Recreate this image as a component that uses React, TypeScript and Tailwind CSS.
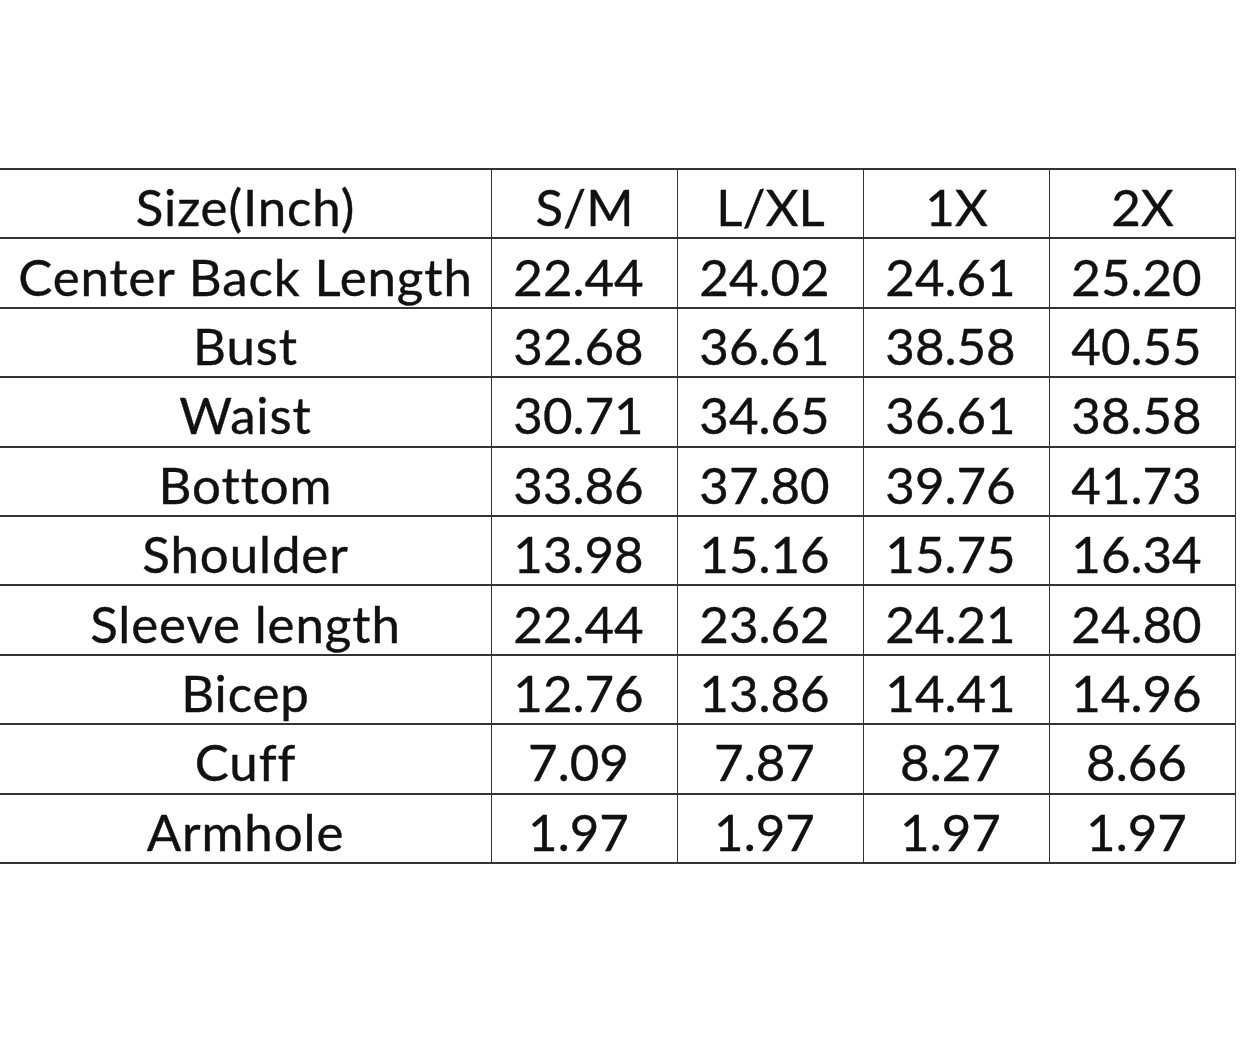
const sizes = ['S/M', 'L/XL', '1X', '2X'];

const rows: [string, string[]][] = [
  ['Center Back Length', ['22.44', '24.02', '24.61', '25.20']],
  ['Bust', ['32.68', '36.61', '38.58', '40.55']],
  ['Waist', ['30.71', '34.65', '36.61', '38.58']],
  ['Bottom', ['33.86', '37.80', '39.76', '41.73']],
  ['Shoulder', ['13.98', '15.16', '15.75', '16.34']],
  ['Sleeve length', ['22.44', '23.62', '24.21', '24.80']],
  ['Bicep', ['12.76', '13.86', '14.41', '14.96']],
  ['Cuff', ['7.09', '7.87', '8.27', '8.66']],
  ['Armhole', ['1.97', '1.97', '1.97', '1.97']],
];

const rowCls =
  'grid grid-cols-[491px_186px_186px_186px_186px] h-[69.4px] border-b-2 border-[#333]';
const labelCls = 'flex items-center justify-center pt-[6px] tracking-[0.9px]';
const cellCls = 'flex items-center justify-center pt-[6px] border-l border-[#333]';

export default function App() {
  return (
    <div
      className="w-[1242px] h-[1048px] bg-white pt-[168px] text-[#111] text-[51px] leading-none [font-variant-ligatures:none] [-webkit-text-stroke:0.4px_#111]"
      style={{ fontFamily: 'Lato, "Open Sans", sans-serif' }}
    >
      <div className="w-[1236px] border-t-2 border-r border-[#333]">
        <div className={rowCls}>
          <div className={labelCls}>Size(Inch)</div>
          {sizes.map((s) => (
            <div key={s} className={cellCls}>
              {s}
            </div>
          ))}
        </div>
        {rows.map(([label, values]) => (
          <div key={label} className={rowCls}>
            <div className={labelCls}>{label}</div>
            {values.map((v, i) => (
              <div key={i} className={cellCls + ' pr-3'}>
                {v}
              </div>
            ))}
          </div>
        ))}
      </div>
    </div>
  );
}
